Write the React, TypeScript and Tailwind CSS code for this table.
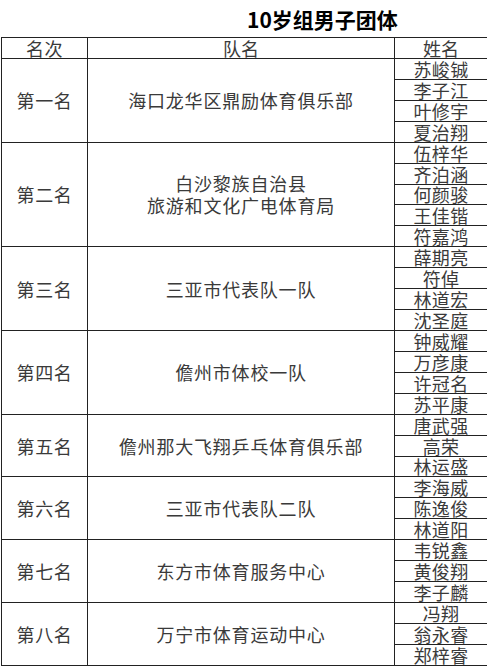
import React from "react";

type Team = { rank: string; team: string[]; names: string[] };

const teams: Team[] = [
  { rank: "第一名", team: ["海口龙华区鼎励体育俱乐部"], names: ["苏峻铖", "李子江", "叶修宇", "夏治翔"] },
  { rank: "第二名", team: ["白沙黎族自治县", "旅游和文化广电体育局"], names: ["伍梓华", "齐泊涵", "何颜骏", "王佳锴", "符嘉鸿"] },
  { rank: "第三名", team: ["三亚市代表队一队"], names: ["薛期亮", "符倬", "林道宏", "沈圣庭"] },
  { rank: "第四名", team: ["儋州市体校一队"], names: ["钟威耀", "万彦康", "许冠名", "苏平康"] },
  { rank: "第五名", team: ["儋州那大飞翔乒乓体育俱乐部"], names: ["唐武强", "高荣", "林运盛"] },
  { rank: "第六名", team: ["三亚市代表队二队"], names: ["李海威", "陈逸俊", "林道阳"] },
  { rank: "第七名", team: ["东方市体育服务中心"], names: ["韦锐鑫", "黄俊翔", "李子麟"] },
  { rank: "第八名", team: ["万宁市体育运动中心"], names: ["冯翔", "翁永睿", "郑梓睿"] },
];

const font = { fontFamily: '"Noto Sans CJK SC", "Noto Sans", sans-serif' };

export default function App() {
  return (
    <div className="w-[487px] h-[667px] overflow-hidden bg-white text-[#3a3a3a]" style={font}>
      <div className="h-[37px] flex items-center pl-[247px] pt-[2px] text-[21px] font-bold text-black leading-none">
        10岁组男子团体
      </div>
      <table className="border-collapse table-fixed w-[486px] ml-[1px]">
        <colgroup>
          <col className="w-[86px]" />
          <col className="w-[307px]" />
          <col className="w-[93px]" />
        </colgroup>
        <tbody>
          <tr className="h-[21px]">
            <td className="border border-[#222] p-0 text-center text-[18px] leading-[20px] align-bottom tracking-[0.5px]">名次</td>
            <td className="border border-[#222] p-0 text-center text-[18px] leading-[20px] align-bottom">队名</td>
            <td className="border border-[#222] p-0 text-center text-[18px] leading-[20px] align-bottom">姓名</td>
          </tr>
          {teams.map((t) =>
            t.names.map((n, i) => (
              <tr key={t.rank + n} className="h-[20.93px]">
                {i === 0 && (
                  <>
                    <td rowSpan={t.names.length} className="border border-[#222] p-0 text-center align-middle text-[18px] leading-[22px] tracking-[0.6px]">
                      {t.rank}
                    </td>
                    <td rowSpan={t.names.length} className="border border-[#222] p-0 text-center align-middle text-[18px] leading-[22px] tracking-[0.8px]">
                      {t.team.map((l) => (
                        <div key={l}>{l}</div>
                      ))}
                    </td>
                  </>
                )}
                <td className="border border-[#222] p-0 text-center align-bottom text-[18px] leading-[19px] h-[20.93px] tracking-[0.3px]">
                  <div className="h-[19px] overflow-visible">{n}</div>
                </td>
              </tr>
            ))
          )}
        </tbody>
      </table>
    </div>
  );
}
